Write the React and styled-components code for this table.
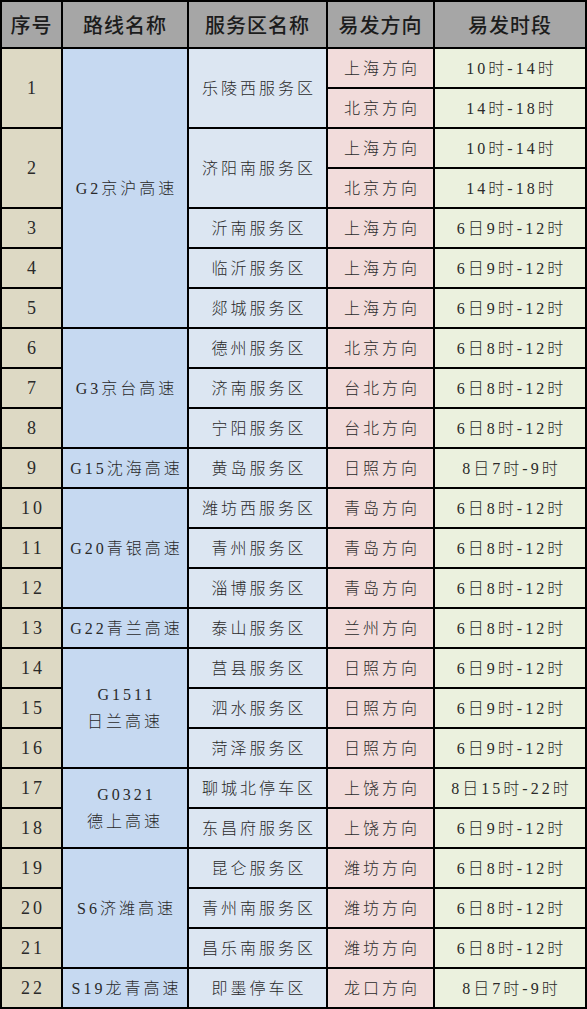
import React from "react";
import styled, { createGlobalStyle } from "styled-components";

const GlobalStyle = createGlobalStyle`
  html, body { margin: 0; padding: 0; background: #fff; }
  body { font-family: "Liberation Serif", "Noto Sans CJK SC", serif; }
`;

const COLORS = {
  no: "#ddd9c4",
  road: "#c6d9f1",
  area: "#dce6f2",
  dir: "#f2dcdb",
  time: "#ebf1de",
};

const Table = styled.table`
  border-collapse: collapse;
  table-layout: fixed;
  width: 585px;
`;

const HeadCell = styled.th`
  height: 45px;
  padding: 0;
  border: 2px solid #000;
  background: #a6a6a6;
  color: #1c1c1c;
  font-family: "Noto Sans CJK SC", sans-serif;
  font-weight: 500;
  font-size: 20px;
  letter-spacing: 1px;
  text-align: center;
  vertical-align: middle;
`;

const Row = styled.tr`
  height: 40px;
`;

const Cell = styled.td`
  padding: 0;
  border: 2px solid #000;
  background: ${(p) => COLORS[p.$kind]};
  color: #2a2a2a;
  font-family: "Liberation Serif", "Noto Sans CJK SC", serif;
  font-weight: 300;
  font-size: ${(p) => (p.$kind === "no" ? "18px" : "16px")};
  letter-spacing: 3px;
  line-height: 27px;
  text-align: center;
  vertical-align: middle;
  white-space: nowrap;
  text-indent: 3px;
`;

// each entry: [序号, 路线(or null), 路线 rowspan, 服务区, 服务区 rowspan, [[方向, 时段], ...]]
const rows = [
  ["1", "G2京沪高速", 7, "乐陵西服务区", [["上海方向", "10时-14时"], ["北京方向", "14时-18时"]]],
  ["2", null, 0, "济阳南服务区", [["上海方向", "10时-14时"], ["北京方向", "14时-18时"]]],
  ["3", null, 0, "沂南服务区", [["上海方向", "6日9时-12时"]]],
  ["4", null, 0, "临沂服务区", [["上海方向", "6日9时-12时"]]],
  ["5", null, 0, "郯城服务区", [["上海方向", "6日9时-12时"]]],
  ["6", "G3京台高速", 3, "德州服务区", [["北京方向", "6日8时-12时"]]],
  ["7", null, 0, "济南服务区", [["台北方向", "6日8时-12时"]]],
  ["8", null, 0, "宁阳服务区", [["台北方向", "6日8时-12时"]]],
  ["9", "G15沈海高速", 1, "黄岛服务区", [["日照方向", "8日7时-9时"]]],
  ["10", "G20青银高速", 3, "潍坊西服务区", [["青岛方向", "6日8时-12时"]]],
  ["11", null, 0, "青州服务区", [["青岛方向", "6日8时-12时"]]],
  ["12", null, 0, "淄博服务区", [["青岛方向", "6日8时-12时"]]],
  ["13", "G22青兰高速", 1, "泰山服务区", [["兰州方向", "6日8时-12时"]]],
  ["14", ["G1511", "日兰高速"], 3, "莒县服务区", [["日照方向", "6日9时-12时"]]],
  ["15", null, 0, "泗水服务区", [["日照方向", "6日9时-12时"]]],
  ["16", null, 0, "菏泽服务区", [["日照方向", "6日9时-12时"]]],
  ["17", ["G0321", "德上高速"], 2, "聊城北停车区", [["上饶方向", "8日15时-22时"]]],
  ["18", null, 0, "东昌府服务区", [["上饶方向", "6日9时-12时"]]],
  ["19", "S6济潍高速", 3, "昆仑服务区", [["潍坊方向", "6日8时-12时"]]],
  ["20", null, 0, "青州南服务区", [["潍坊方向", "6日8时-12时"]]],
  ["21", null, 0, "昌乐南服务区", [["潍坊方向", "6日8时-12时"]]],
  ["22", "S19龙青高速", 1, "即墨停车区", [["龙口方向", "8日7时-9时"]]],
];

function RoadName({ name }) {
  if (Array.isArray(name)) {
    return (
      <>
        {name[0]}
        <br />
        {name[1]}
      </>
    );
  }
  return name;
}

export default function App() {
  return (
    <>
      <GlobalStyle />
      <Table>
        <colgroup>
          <col style={{ width: 61 }} />
          <col style={{ width: 126 }} />
          <col style={{ width: 139 }} />
          <col style={{ width: 107 }} />
          <col style={{ width: 152 }} />
        </colgroup>
        <thead>
          <tr>
            <HeadCell>序号</HeadCell>
            <HeadCell>路线名称</HeadCell>
            <HeadCell>服务区名称</HeadCell>
            <HeadCell>易发方向</HeadCell>
            <HeadCell>易发时段</HeadCell>
          </tr>
        </thead>
        <tbody>
          {rows.map(([no, road, roadSpan, area, dirs]) =>
            dirs.map(([dir, time], i) => (
              <Row key={no + "-" + i}>
                {i === 0 && (
                  <Cell $kind="no" rowSpan={dirs.length}>
                    {no}
                  </Cell>
                )}
                {i === 0 && road && (
                  <Cell $kind="road" rowSpan={roadSpan}>
                    <RoadName name={road} />
                  </Cell>
                )}
                {i === 0 && (
                  <Cell $kind="area" rowSpan={dirs.length}>
                    {area}
                  </Cell>
                )}
                <Cell $kind="dir">{dir}</Cell>
                <Cell $kind="time">{time}</Cell>
              </Row>
            ))
          )}
        </tbody>
      </Table>
    </>
  );
}
